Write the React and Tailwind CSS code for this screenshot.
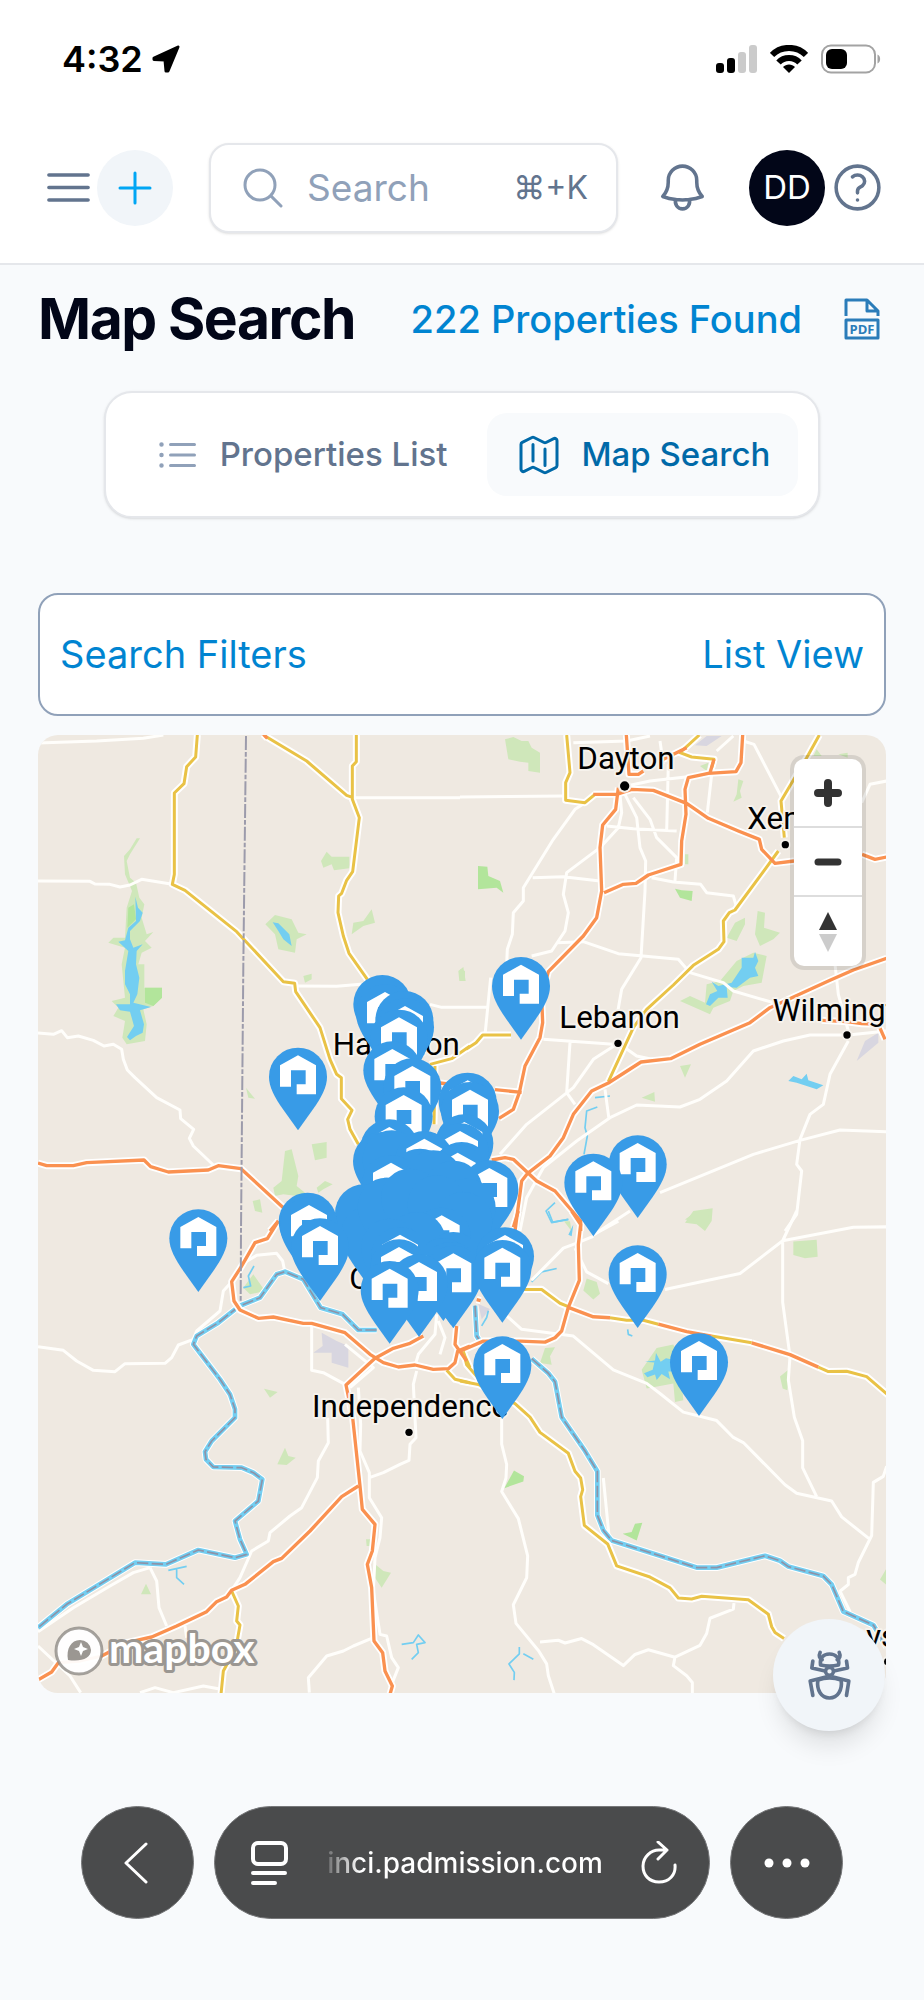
import {
  HiOutlineBars3,
  HiOutlineBell,
  HiOutlineListBullet,
  HiOutlineMagnifyingGlass,
  HiOutlineMap,
  HiOutlinePlus,
  HiOutlineQuestionMarkCircle,
} from 'react-icons/hi2'

// Each tile carries its own origin, paths are local to it
const TILES = [
  {
    transform: 'translate(0 0)',
    green:
      'M330 322 300 370 290 390 300 440 318 455 328 500 343 520 335 560 350 610 370 603 345 630 365 650 335 665 325 700 343 700 343 770 396 770V800L370 825 340 835 350 880 345 930 290 940 277 920 285 870 250 855 265 830 245 810 285 800 275 700 285 650 235 635 250 620 285 620 290 530 306 480 285 430 282 375 300 355 320 322ZM873 390 890 362 905 377H958V412L912 418 905 400 880 410ZM965 610 970 575 1000 570 1025 535 1035 575 1000 585ZM706 580 735 552 785 565 805 605 830 610 800 625 795 665 745 655 735 610ZM820 735 845 728 845 745 825 755ZM1285 720 1300 708 1307 750H1288ZM648 1070 660 1085 675 1103 655 1100ZM845 1240 890 1233V1280L855 1288ZM765 1260 785 1255 805 1335 800 1365 825 1385 800 1395 760 1390 735 1395 730 1370 755 1350ZM860 1370 885 1350 908 1360 880 1375 865 1385ZM668 1410 690 1405 697 1445 675 1440Z',
    park: 'M345 770H396V800L370 825 345 815ZM295 530 312 520 318 565 292 590Z',
    water:
      'M316 497 324 530 338 545 330 570 300 600 300 625 310 650 338 640 320 660 318 700 328 740 322 790 310 815 363 828 330 838 342 880 338 905 318 915 300 928 291 918 312 885 300 842 270 838 258 820 300 820 300 790 285 760 285 720 295 660 265 632 285 628 295 590 318 570ZM728 574 745 577 778 610 785 645 760 625 745 600Z',
    street:
      'M24 36 200 30 340 22 400 12M24 450 180 451 195 459 240 460 270 468 300 462 335 445 427 460M24 906 70 910 95 899 112 920 145 915 190 928 222 945 250 940 275 955 280 985 292 1017 315 1040 380 1100 450 1137 452 1163 491 1195 478 1222 490 1245 550 1302M967 200H1290M797 765 920 766 1010 758M1200 820 1235 829H1375',
    trunk:
      'M502 12 497 78 470 107 462 158 433 186V430L427 460 465 478 620 602 760 752 794 757 797 782 870 890 900 985 920 1030 934 1040V1103L966 1138 953 1165 960 1195 985 1240M705 15 830 90 950 193 967 199M979 12V92L967 105V205L988 260 968 422 950 448 935 487 926 495 924 545 940 615 957 667 1012 745M1200 1000 1265 983 1320 945M1215 1005 1212 1180',
    motorway:
      'M24 1296 50 1304H130L170 1295 342 1287 362 1307 415 1323 535 1317 565 1304 633 1313 760 1430M745 1470 720 1500M700 10 712 22M1230 1056 1280 1062',
    border: 'M648 15 640 700 633 1500 632 1715',
  },
  {
    transform: 'translate(1290 0)',
    green:
      'M135 25 160 18 185 30 205 30 215 50 240 65 240 125 205 120 205 95 180 92 145 85ZM835 145 850 150 840 180 845 200 820 212 830 190ZM893 540 915 545 912 590 960 605 940 625 900 645 885 610ZM855 560V580L830 630 800 620 825 575ZM740 760 780 750 830 690 880 665 920 675 905 755 850 765 820 780 810 810 760 830 750 850 660 810 690 795 735 815ZM660 1005 693 1000 675 1040ZM545 1100 583 1083 585 1112ZM675 1475 700 1440 758 1432 755 1470 735 1500 710 1480ZM0 715 15 720V750H0ZM675 370H685V400H675ZM1060 75 1070 55 1085 75ZM1135 70 1163 65V80ZM720 105 745 95 740 120Z',
    park: 'M54 405 82 407 85 435 120 450 130 485 110 470 54 475ZM645 473 665 478 698 480 695 510 660 500Z',
    airport: 'M740 15 785 15 740 45 705 43ZM1190 990 1215 930 1255 905 1255 935Z',
    water:
      'M885 662 895 690 885 710 895 735 870 740 850 755 830 770 800 768 803 800 775 800 750 825 738 820 750 790 772 780 755 752 775 765 815 755 845 710 845 680 880 680ZM985 1050 1000 1035 1025 1045 1040 1028 1045 1048 1090 1063 1070 1075 1040 1065 1010 1055Z',
    stream: 'M450 1095 405 1100M412 1128 380 1140 375 1190 382 1215 372 1270M325 1465 275 1475 258 1440 285 1415',
    street:
      'M0 198 315 195M400 200 345 235 280 325 190 470V510L160 545 157 610 142 655 140 700M440 285 520 293 650 300M480 190 485 245 475 290 420 350 320 425 310 490 325 545 315 600 275 660 215 675M495 190 530 260 540 350 557 390 555 480 543 680 485 775 470 860M520 200 570 265 590 320 650 380 645 450M218 440 310 437 420 450M290 635 370 632 475 668 655 685 690 725 790 755 820 780 940 815M575 440 640 453 722 460 740 485 820 495 830 530M500 165 570 150 750 130M625 100 620 300M755 130 742 245M340 35 500 30 570 15M600 30 610 100M820 15 770 60M850 30 882 40 965 200M1280 150 1230 160 1205 215M250 925 460 940M330 935 320 1085 345 1120M470 940 400 985 340 1070 200 1180 120 1270M480 940 530 975 600 990M1125 700 1135 790 1165 900M1280 900 1230 905 1165 912 1050 912 970 930 880 960 800 1050 720 1105 660 1128 530 1122 450 1160 350 1230 250 1310 200 1400 180 1500M435 1075 447 1165M1165 930 1110 1030 1090 1120 1050 1150 1020 1225 1010 1300 1025 1320 1010 1450 975 1500M1280 1202 1140 1197 1020 1228 880 1270 600 1385M92 740 75 912M510 1440 400 1512',
    trunk:
      'M320 12 330 125 317 155V208L375 215 405 190M718 12 660 65 695 78 762 85 755 110M1078 12 1040 80 963 210 973 320M955 360 915 415 825 537 808 545 790 570 792 632 775 655 700 703 640 762 560 835 520 890 445 1052M18 955 48 935 68 912H153',
    motorway:
      'M499 12 507 130H535L550 120M848 12 843 95 828 122 745 127 685 140 675 175 678 250 665 330 663 400 565 432 528 457 490 460 432 485M762 85 750 125M610 85 680 50M400 190 470 190 515 175 580 178 680 217 745 262 835 300 898 325 905 355 945 397 1002 390M1206 370 1245 385 1280 378M475 170 467 235 428 282 420 350 425 480 410 560 370 615 265 722 245 800 248 875 240 920 195 1005 178 1085 160 1135 117 1162M105 1076 185 1084M1280 682 1180 717 1110 748 930 830 870 875 720 940 632 983 543 993 445 1056 395 1080 340 1150 310 1220 270 1275 203 1327 185 1350 165 1500M95 1287 135 1280 160 1285 230 1350 285 1380 362 1470V1500M1085 868 1160 872 1205 878 1255 880 1275 925',
  },
  {
    transform: 'translate(0 1440)',
    green:
      'M640 230 670 190 705 240 660 250ZM702 533 743 543 720 560ZM742 760 765 710 775 735 797 740 770 762ZM1008 985H1020V1005H1010ZM1030 1055 1060 1080 1083 1085 1055 1130 1035 1100ZM333 1150 348 1118 363 1150Z',
    airport: 'M875 365 920 390 955 405V470L905 455V425H850L878 405Z',
    stream:
      'M672 165 655 195 662 225 640 230M415 1078 470 1066M440 1075V1100L462 1120M1115 1300 1150 1295 1165 1272 1185 1295 1160 1300 1165 1325 1145 1345',
    river:
      'M1040 357H985L938 310 872 290 820 205 765 182 740 190 690 260 628 285 565 335 500 375 490 400 570 505 600 550 615 595V620L545 690 525 722 528 745 550 768 635 770 670 785 697 805 685 870 615 930 630 985 650 1030 615 1040 505 1017 408 1060 315 1055 110 1180 24 1250',
    street:
      'M24 407 100 418 140 450 190 478 255 482 285 458 405 457 425 440 445 402 490 385 500 360 570 300 580 240 605 212M635 160 680 133 740 127 758 150 765 185M845 345V478L880 485 945 520M893 620 895 695 865 750 862 800 820 880 815 890 780 915 720 965 715 990 665 1020 630 1100 605 1138M985 530 992 640 990 720 1018 785V860L1055 920 1050 980 1035 1040 1030 1140 1050 1270 1070 1275 1085 1340 1105 1370 1085 1420M1160 480 1150 520 1158 680 1140 700 1137 748 1110 760 1060 785 1018 800M360 1070 380 1110 387 1190 410 1245M465 1245 470 1280M24 1305 120 1395 152 1445M330 1445 375 1430 430 1445 520 1425 573 1435M1030 1280 970 1305 940 1320 890 1335 835 1400 838 1445M24 1262 130 1190 240 1125 310 1085 360 1070M1220 310 1215 370 1165 430 1155 465M1225 330 1245 380 1230 430M945 400 1030 470 960 530',
    trunk: 'M1250 478 1275 505 1320 515M605 1140 625 1185 620 1230 630 1242 618 1310 580 1380 573 1450M1300 425 1320 470',
    motorway:
      'M745 30 712 83 675 95 655 130 632 170 605 212 612 270 630 297 685 322 730 318 820 337 845 337 945 365 1020 430 1060 455 1105 468 1155 462 1210 475 1255 473 1275 455 1283 420 1320 405M1180 375 1140 397 1090 412 1035 442 948 522 968 620 990 825 997 895 1035 940 1027 1020 1012 1060 1025 1130 1032 1290 1058 1325 1065 1380 1087 1425 1080 1450M985 825 935 857 840 960 755 1042 730 1052 645 1120 605 1138 590 1158 560 1172 530 1202 440 1245 365 1278 290 1295 215 1335 150 1350 85 1355 65 1383 22 1408M1280 345 1275 400 1310 450',
  },
  {
    transform: 'translate(1290 1440) scale(1 1.014)',
    green:
      'M370 235 380 200 410 210 420 245 400 262ZM255 405 285 403 270 430 275 455 240 450ZM1000 90 1070 85 1073 135 1035 140 1000 130ZM675 25 710 0 755 0 735 35ZM545 470 590 405 640 395 660 440 670 560 645 565 640 510 560 525ZM960 490 985 470 982 530 968 525ZM1260 1090 1278 1060V1105ZM312 30 330 30 335 60Z',
    park: 'M133 820 162 768 192 785 190 800ZM488 955 515 950 525 925 547 922 530 975Z',
    airport: 'M55 275 90 290 65 320Z',
    water:
      'M552 480 578 470 583 448 555 446 585 442 588 420 602 446 618 436 640 440 655 475 625 475 630 498 605 482 590 500 585 484 562 492ZM340 40 335 75 325 70Z',
    stream:
      'M265 0 278 33 325 25M215 210 245 180 290 170M178 1290V1310L147 1340 163 1365 162 1388M190 1310 220 1326M503 350 505 365 517 370M85 295 80 315 65 340',
    river:
      'M45 280 50 370 60 385M215 437 265 480 285 505 305 610 375 710 412 770V900L430 945 455 975 600 1020 710 1055 770 1055 915 1020 960 1035 985 1052 1090 1080 1115 1105 1150 1185 1240 1225 1280 1290',
    street:
      'M400 75 350 95 310 110 215 205M345 110 380 180 445 215M475 30 400 70M1010 0 968 88V270L990 430 985 500 1003 610 1028 680V760L1070 845M1280 47 1180 48 968 88 840 185 720 210 615 232M140 310 185 350 340 370 460 470 560 510 600 540 670 595 770 620 820 670 850 685 975 810 1010 835 1115 858 1145 905 1228 970M1280 755 1270 785 1240 803 1235 960 1195 1040 1185 1075 1165 1085 1165 1105 1140 1125 1170 1185M125 600V690L140 750 138 790 125 830 175 910 203 1020 200 1085 160 1165 168 1220 235 1300 260 1340 265 1375 290 1450M240 1275 295 1270 315 1278 365 1265 400 1283 490 1345 525 1312 565 1298 645 1320 640 1345 680 1375 697 1395V1450M645 1320 720 1285 740 1250 750 1205 820 1178 822 1160M430 790 447 960',
    trunk:
      'M190 232H245L300 273 325 283M450 316 500 323 550 323 595 335M755 370 875 390M1075 462 1105 475 1160 474 1220 490 1285 545M0 503 55 513 165 570 210 610 240 655 325 717 345 770 362 790 368 825 362 845 373 930 443 985 470 1050 570 1083 630 1115 655 1145 695 1148 725 1140 865 1150 925 1193 935 1230 945 1247 972 1265M10 415 20 455 60 500',
    motorway:
      'M0 415 70 385 180 385 255 388 285 375 305 355 325 285 358 205 355 100 362 40 335 0M175 0 160 48M325 285 400 313 450 316M595 335 680 357 755 370M875 390 990 425 1075 462M50 262 62 265',
  },
]

// Painted bottom to top
const LAYERS = [
  { key: 'green', fill: '#cfe7ba' },
  { key: 'park', fill: '#b2e59b' },
  { key: 'airport', fill: '#d8d6e0' },
  { key: 'water', fill: '#73cef1' },
  { key: 'stream', stroke: '#73cef1', width: 5 },
  { key: 'street', stroke: '#fffefb', width: 9 },
  { key: 'river', stroke: '#ffffff', width: 20 },
  { key: 'river', stroke: '#73cef1', width: 14 },
  { key: 'river', stroke: '#8d93a8', width: 5, dash: '34 10' },
  { key: 'trunk', stroke: '#ffffff', width: 21 },
  { key: 'motorway', stroke: '#ffffff', width: 21 },
  { key: 'trunk', stroke: '#e9c246', width: 9 },
  { key: 'motorway', stroke: '#fa9150', width: 10 },
  { key: 'border', stroke: '#9c9bab', width: 6, dash: '42 6 14 6' },
]

const CITIES = [
  { name: 'Dayton', x: 1642, y: 115, dot: [1784, 165, 14] },
  { name: 'Xenia', x: 2152, y: 295, dot: [2266, 341, 11] },
  { name: 'Lebanon', x: 1588, y: 890, dot: [1764, 937, 11] },
  { name: 'Wilmington', x: 2228, y: 870, dot: [2451, 912, 11] },
  { name: 'Hamilton', x: 908, y: 972 },
  { name: 'Cincinnati', x: 958, y: 1675 },
  { name: 'Independence', x: 846, y: 2058, dot: [1137, 2104, 11] },
  { name: 'Maysville', x: 2376, y: 2748, dot: [2573, 2792, 11] },
]

// [x, y, hideIcon] of the round part of each pin, later ones lie on top
const PINS = [
  [804, 1037], [1473, 765], [1823, 1300], [1690, 1355], [505, 1522],
  [1057, 819, true], [1065, 847], [1123, 867, true], [1125, 889], [1107, 923],
  [1087, 1018], [1147, 1069], [1121, 1156],
  [1313, 1112], [1320, 1140], [1303, 1237], [1290, 1264],
  [1078, 1252], [1056, 1290, true], [1085, 1285, true], [1183, 1287],
  [1295, 1320, true], [1283, 1329], [1378, 1375], [1170, 1340, true], [1083, 1359],
  [1210, 1345, true], [1270, 1376, true], [1310, 1430, true],
  [1002, 1447, true], [1020, 1510, true], [1070, 1427, true], [1140, 1400, true],
  [1220, 1420, true], [1300, 1470, true], [1235, 1517], [1160, 1530, true],
  [1080, 1550, true], [1270, 1590, true], [1110, 1575], [1107, 1612],
  [1240, 1609], [1262, 1620, true], [1270, 1631], [1167, 1657], [1079, 1677],
  [833, 1472, true], [837, 1486], [870, 1549],
  [1425, 1576], [1417, 1614], [1823, 1630], [2007, 1894], [1417, 1903],
]

function Pin({ x, y, hideIcon }) {
  return (
    <g transform={`translate(${x} ${y})`}>
      <path d="M0 161-45 98C-70 62-87 32-87 0A87 87 0 1 1 87 0C87 32 70 62 45 98Z" fill="#389be7" />
      {!hideIcon && <path d="M0-64 54-34V53H-4V23H23V-19H-21V30H-54V-34Z" fill="#fff" />}
    </g>
  )
}

function PropertyMap() {
  return (
    <svg
      viewBox="24 12 2544 2874"
      preserveAspectRatio="xMidYMid slice"
      className="block h-full w-full bg-[#efe9e1]"
      role="img"
      aria-label="Property map"
    >
      {LAYERS.map((layer, i) => (
        <g
          key={i}
          fill={layer.fill ?? 'none'}
          stroke={layer.stroke}
          strokeWidth={layer.width}
          strokeDasharray={layer.dash}
          strokeLinejoin="round"
        >
          {TILES.filter((tile) => tile[layer.key]).map((tile) => (
            <path key={tile.transform} d={tile[layer.key]} transform={tile.transform} />
          ))}
        </g>
      ))}

      <g
        fontFamily="Roboto, sans-serif"
        fontSize="94"
        stroke="#f6f2ec"
        strokeWidth="12"
        strokeLinejoin="round"
        style={{ paintOrder: 'stroke' }}
      >
        {CITIES.map(({ name, x, y, dot }) => (
          <g key={name}>
            {dot && <circle cx={dot[0]} cy={dot[1]} r={dot[2]} />}
            <text x={x} y={y}>{name}</text>
          </g>
        ))}
      </g>

      {PINS.map(([x, y, hideIcon]) => (
        <Pin key={`${x}-${y}`} x={x} y={y} hideIcon={hideIcon} />
      ))}
    </svg>
  )
}

function MapControls() {
  return (
    <div className="absolute right-6 top-6 flex w-[68px] flex-col divide-y-2 divide-[#dddddd] rounded-[10px] bg-white ring-4 ring-black/10">
      <button type="button" aria-label="Zoom in" className="flex h-[69px] items-center justify-center">
        <svg width="28" height="28" viewBox="0 0 28 28" stroke="#333" strokeWidth="8" strokeLinecap="round">
          <path d="M14 4V24M4 14H24" />
        </svg>
      </button>
      <button type="button" aria-label="Zoom out" className="flex h-[69px] items-center justify-center">
        <svg width="28" height="28" viewBox="0 0 28 28" stroke="#333" strokeWidth="7" strokeLinecap="round">
          <path d="M4 14H24" />
        </svg>
      </button>
      <button type="button" aria-label="Reset north" className="flex h-[69px] items-center justify-center">
        <svg width="18" height="40" viewBox="0 0 18 40">
          <path d="M0 18 9 0 18 18Z" fill="#333" />
          <path d="M0 22 9 40 18 22Z" fill="#ccc" />
        </svg>
      </button>
    </div>
  )
}

function MapboxLogo() {
  return (
    <a href="#mapbox" aria-label="Mapbox" className="absolute bottom-3 left-4">
      <svg width="230" height="60" viewBox="0 0 230 60" className="block">
        <circle cx="25" cy="30" r="23" fill="#fff" fillOpacity=".95" stroke="#8f8b86" strokeOpacity=".8" strokeWidth="3" />
        <path d="M14 39C12 28 17 19 26 19A11 11 0 0 1 37 29C37 37 28 41 14 39Z" fill="#9b9792" />
        <path d="M27 21 29 26 34 28 29 30 27 35 25 30 20 28 25 26Z" fill="#fff" />
        <text
          x="55"
          y="42"
          fontFamily="Lato, sans-serif"
          fontWeight="700"
          fontSize="41"
          fill="#fff"
          stroke="#9b9792"
          strokeWidth="6"
          strokeLinejoin="round"
          style={{ paintOrder: 'stroke' }}
        >
          mapbox
        </text>
      </svg>
    </a>
  )
}

function BugButton() {
  return (
    <button
      type="button"
      aria-label="Report a bug"
      className="absolute -bottom-[38px] right-px flex h-28 w-28 items-center justify-center rounded-full bg-[#f1f5f9] text-slate-500 shadow-xl"
    >
      <svg
        width="45"
        height="53"
        viewBox="1040 1291 134 159"
        fill="none"
        stroke="currentColor"
        strokeWidth="11"
        strokeLinecap="round"
        strokeLinejoin="round"
      >
        <path d="M1079 1301C1074 1312 1077 1320 1085 1323M1136 1301C1141 1312 1138 1320 1130 1323" />
        <path d="M1080 1339C1077 1318 1088 1306 1107 1306S1138 1318 1134 1339Q1107 1345 1080 1339Z" />
        <circle cx="1107" cy="1358" r="12" />
        <path d="M1057 1327 1054 1348 1094 1357M1158 1327 1161 1348 1120 1357" />
        <path d="M1057 1430 1049 1387 1096 1375M1158 1430 1165 1387 1118 1375" />
        <path d="M1072 1384Q1107 1372 1142 1384C1146 1414 1132 1438 1107 1438S1068 1414 1072 1384Z" />
      </svg>
    </button>
  )
}

function StatusBar() {
  return (
    <div className="flex h-28 items-center justify-between pl-[62px] pr-[43px] pt-[6px] text-black">
      <div className="flex items-center gap-2 text-[36px] font-semibold leading-none">
        <span>4:32</span>
        <svg width="30" height="30" viewBox="0 0 30 30" fill="currentColor" stroke="currentColor" strokeWidth="3" strokeLinejoin="round">
          <path d="M27 3 3 14 3 15.500 14 16 15 27 17 27Z" />
        </svg>
      </div>
      <div className="flex items-center gap-[13px]">
        <svg width="41" height="28" viewBox="0 0 41 28">
          <rect x="0" y="18" width="8" height="10" rx="3" />
          <rect x="11" y="13" width="8" height="15" rx="3" />
          <rect x="22" y="7" width="8" height="21" rx="3" fill="#cbcbcb" />
          <rect x="33" y="0" width="8" height="28" rx="3" fill="#cbcbcb" />
        </svg>
        <svg width="38" height="28" viewBox="0 0 38 28" fill="none" stroke="currentColor" strokeWidth="6">
          <path d="M2 10C11 .5 27 .5 36 10" />
          <path d="M8.500 17.500C14 11.500 24 11.500 29.500 17.500" />
          <path d="M13 22C16 18.500 22 18.500 25 22L19 28Z" fill="currentColor" stroke="none" />
        </svg>
        <svg width="60" height="30" viewBox="0 0 60 30">
          <rect x="1" y="1.500" width="53" height="27" rx="9" fill="none" stroke="#a3a3a3" strokeWidth="2" />
          <rect x="5" y="5" width="21" height="20" rx="6" />
          <path d="M56.500 10.500C60 12 60 18 56.500 19.500Z" fill="#a3a3a3" />
        </svg>
      </div>
    </div>
  )
}

function Header() {
  return (
    <header className="border-b-2 border-gray-200 bg-white">
      <StatusBar />
      <div className="flex h-[151px] items-center pl-10 pr-[38px] text-slate-500">
        <button type="button" aria-label="Menu">
          <HiOutlineBars3 size={57} />
        </button>
        <button
          type="button"
          aria-label="Add"
          className="flex h-19 w-19 shrink-0 items-center justify-center rounded-full bg-slate-100 text-sky-500"
        >
          <HiOutlinePlus size={48} />
        </button>
        <label className="ml-9 flex h-[90px] min-w-0 flex-1 items-center gap-5 rounded-[20px] border-2 border-gray-200 bg-white px-7 shadow-sm">
          <HiOutlineMagnifyingGlass size={48} className="shrink-0 text-slate-400" />
          <input
            type="search"
            placeholder="Search"
            aria-label="Search"
            className="w-0 min-w-0 flex-1 bg-transparent text-[37px] outline-none placeholder:text-slate-400"
          />
          <kbd className="font-['Inter',sans-serif] text-[32px]">⌘+K</kbd>
        </label>
        <button type="button" aria-label="Notifications" className="ml-9">
          <HiOutlineBell size={57} />
        </button>
        <button
          type="button"
          aria-label="Account"
          className="ml-[38px] flex h-19 w-19 shrink-0 items-center justify-center rounded-full bg-slate-950 text-[33px] text-white"
        >
          DD
        </button>
        <button type="button" aria-label="Help" className="ml-1">
          <HiOutlineQuestionMarkCircle size={57} />
        </button>
      </div>
    </header>
  )
}

function PdfIcon() {
  return (
    <svg width="36" height="42" viewBox="0 0 36 42" fill="none" stroke="currentColor" strokeWidth="3" strokeLinejoin="round">
      <path d="M2 18V2H23L34 13V18M23 2V13H34" />
      <rect x="2" y="22" width="32" height="18" />
      <text
        x="18"
        y="36"
        textAnchor="middle"
        fontFamily="Open Sans, sans-serif"
        fontWeight="700"
        fontSize="13"
        fill="currentColor"
        stroke="none"
      >
        PDF
      </text>
    </svg>
  )
}

function BrowserBar() {
  const shape = 'flex h-[113px] items-center rounded-full border border-[#77787a] bg-[#4a4b4c] text-white'

  return (
    <div className="mt-[113px] flex items-center gap-5 px-[81px] pb-[81px]">
      <button type="button" aria-label="Back" className={`${shape} w-[113px] shrink-0 justify-center pr-1`}>
        <svg width="26" height="42" viewBox="0 0 26 42" fill="none" stroke="currentColor" strokeWidth="3" strokeLinecap="round" strokeLinejoin="round">
          <path d="M23 2 3 21 23 40" />
        </svg>
      </button>
      <div className={`${shape} min-w-0 flex-1 justify-between px-8`}>
        <button type="button" aria-label="Page settings">
          <svg width="42" height="44" viewBox="0 0 42 44" fill="none" stroke="currentColor" strokeWidth="4" strokeLinecap="round">
            <rect x="6" y="2" width="33" height="21" rx="5" />
            <path d="M6 32H38M6 42H28" />
          </svg>
        </button>
        <a
          href="#address"
          className="bg-linear-to-r from-white/20 to-white to-12% bg-clip-text text-[28px] font-medium text-transparent"
        >
          inci.padmission.com
        </a>
        <button type="button" aria-label="Reload">
          <svg width="36" height="44" viewBox="0 0 36 44" fill="none" stroke="currentColor" strokeWidth="3" strokeLinecap="round" strokeLinejoin="round">
            <path d="M34 24C35 34 28 41 18 41S2 34 2 25 10 9 18 9H26M17 1 26 9 17 18" />
          </svg>
        </button>
      </div>
      <button type="button" aria-label="More" className={`${shape} w-[113px] shrink-0 justify-center`}>
        <svg width="46" height="10" viewBox="0 0 46 10" fill="currentColor">
          <circle cx="5" cy="5" r="4.500" />
          <circle cx="23" cy="5" r="4.500" />
          <circle cx="41" cy="5" r="4.500" />
        </svg>
      </button>
    </div>
  )
}

export default function App() {
  return (
    <div className="min-h-screen bg-slate-50 font-['Inter',sans-serif]">
      <Header />

      <main className="px-[38px] pt-6">
        <div className="flex h-15 items-center">
          <h1 className="whitespace-nowrap text-[57px] font-bold tracking-tight text-slate-950">Map Search</h1>
          <a href="#results" className="ml-auto whitespace-nowrap text-[38px] font-medium text-sky-600">
            222 Properties Found
          </a>
          <button type="button" aria-label="Export PDF" className="ml-9 flex w-12 justify-center text-[#2b7cb9]">
            <PdfIcon />
          </button>
        </div>

        <nav className="mx-auto mt-[42px] flex w-fit gap-3 rounded-[28px] border-2 border-gray-200 bg-white p-5 text-[33px] font-medium shadow-sm">
          <a href="#list" className="flex h-[83px] items-center gap-[18px] whitespace-nowrap rounded-[20px] px-7 text-slate-500">
            <HiOutlineListBullet size={48} className="text-slate-400" />
            Properties List
          </a>
          <a
            href="#map"
            aria-current="page"
            className="flex h-[83px] items-center gap-[18px] whitespace-nowrap rounded-[20px] bg-slate-50 px-7 text-sky-700"
          >
            <HiOutlineMap size={48} />
            Map Search
          </a>
        </nav>

        <div className="mt-[75px] flex h-[123px] items-center justify-between rounded-[20px] border-2 border-slate-400 bg-white px-5 text-[38px] text-sky-600">
          <button type="button">Search Filters</button>
          <button type="button">List View</button>
        </div>

        <section className="relative mt-[19px]">
          <div className="h-[958px] overflow-hidden rounded-[20px]">
            <PropertyMap />
          </div>
          <MapControls />
          <MapboxLogo />
          <BugButton />
        </section>
      </main>

      <BrowserBar />
    </div>
  )
}
